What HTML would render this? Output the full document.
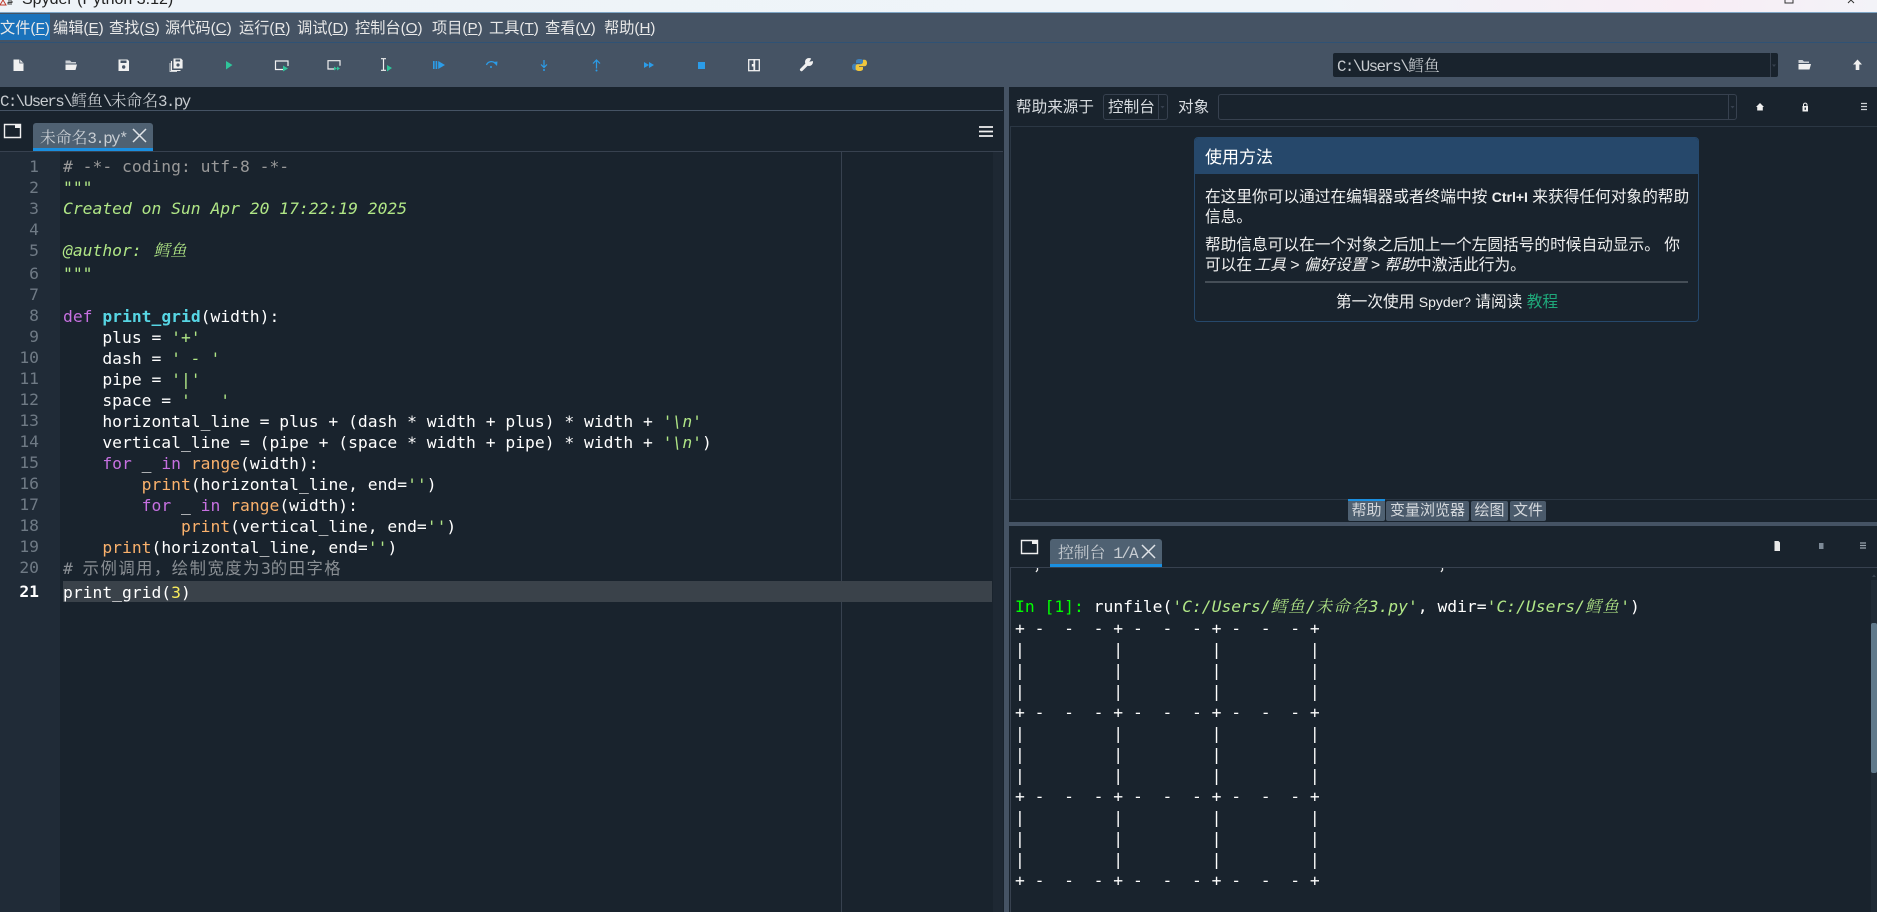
<!DOCTYPE html>
<html lang="zh">
<head>
<meta charset="utf-8">
<title>Spyder (Python 3.12)</title>
<style>
html,body{margin:0;padding:0;background:#19232D;}
body{position:relative;width:1877px;height:912px;overflow:hidden;font-family:"Liberation Sans","Noto Sans CJK SC",sans-serif;color:#f0f0f0;}
.a{position:absolute;}
.t{position:absolute;white-space:nowrap;}
.menu{position:absolute;top:19px;line-height:20px;font-size:15.2px;color:#e8e8e8;white-space:nowrap;}
.m{position:absolute;white-space:pre;font-family:"Liberation Mono","Noto Serif CJK SC",monospace;font-size:15.8px;letter-spacing:-1.58px;line-height:20px;color:#c8ccd0;}
.m span{font-family:"Noto Serif CJK SC",serif;font-size:15.8px;letter-spacing:0;}
.s{position:absolute;white-space:nowrap;font-size:15.6px;line-height:20px;color:#d8dce0;}
.c{position:absolute;left:63px;white-space:pre;font-family:"DejaVu Sans Mono","Noto Sans CJK SC",monospace;font-size:16.33px;line-height:21px;color:#fff;}
.n{position:absolute;left:0;width:39px;text-align:right;font-family:"DejaVu Sans Mono",monospace;font-size:16.33px;line-height:21px;color:#6f7a85;}
.g{color:#b0e686;font-style:italic;}
.z{font-family:"Noto Serif CJK SC",serif;letter-spacing:1.3px;}
.k{color:#c670e0;}
.d{color:#57d6e4;font-weight:bold;}
.b{color:#fab16c;}
.o{color:#999;}
.y{color:#faed5c;}
.o2{color:#8a8f94;}
.h{position:absolute;left:1205px;white-space:nowrap;font-size:15.7px;line-height:20px;color:#f0f0f0;}
.h b,.h2{font-family:"Liberation Sans",sans-serif;}
.bt{position:absolute;top:501px;height:20px;background:#4a5a6b;border-radius:2px;color:#d4d8dc;font-size:15px;line-height:20px;text-align:center;}
.q{position:absolute;left:1015px;white-space:pre;font-family:"DejaVu Sans Mono","Noto Sans CJK SC",monospace;font-size:16.33px;line-height:21px;color:#fff;}
</style>
</head>
<body>
<!-- title bar -->
<div class="a" style="left:0;top:0;width:1877px;height:12px;background:linear-gradient(90deg,#eef3f8 0%,#eff4f9 70%,#f8edf5 90%,#f3f3f8 100%);"></div>
<div class="a" style="left:0;top:12px;width:1877px;height:1px;background:#7fa6c6;"></div>
<!-- menu and toolbar -->
<div class="a" style="left:0;top:13px;width:1877px;height:74px;background:#455364;"></div>
<div class="a" style="left:0;top:42px;width:1877px;height:1px;background:#2f5275;"></div>
<div class="a" style="left:0;top:14px;width:50px;height:26px;background:#1a72bb;"></div>
<div class="menu" style="left:0;">文件(<u>F</u>)</div>
<div class="menu" style="left:53px;">编辑(<u>E</u>)</div>
<div class="menu" style="left:109px;">查找(<u>S</u>)</div>
<div class="menu" style="left:165px;">源代码(<u>C</u>)</div>
<div class="menu" style="left:239px;">运行(<u>R</u>)</div>
<div class="menu" style="left:297px;">调试(<u>D</u>)</div>
<div class="menu" style="left:355px;">控制台(<u>O</u>)</div>
<div class="menu" style="left:432px;">项目(<u>P</u>)</div>
<div class="menu" style="left:489px;">工具(<u>T</u>)</div>
<div class="menu" style="left:545px;">查看(<u>V</u>)</div>
<div class="menu" style="left:604px;">帮助(<u>H</u>)</div>

<!-- working dir -->
<div class="a" style="left:1333px;top:53px;width:445px;height:24px;background:#19232D;border-radius:2px;"></div>
<div class="a" style="left:1770px;top:53px;width:1px;height:24px;background:#37414F;"></div>
<div class="m" style="left:1337px;top:55px;">C:\Users\<span>鳕鱼</span></div>

<!-- path row -->
<div class="m" style="left:0;top:90px;">C:\Users\<span>鳕鱼</span>\<span>未命名</span>3.py</div>
<div class="a" style="left:0;top:110px;width:1003px;height:1px;background:#455364;"></div>

<!-- editor tab -->
<div class="a" style="left:33px;top:123px;width:120px;height:25px;background:#4f6172;border-radius:3px 3px 0 0;"></div>
<div class="a" style="left:33px;top:148px;width:120px;height:3px;background:#1a8fe0;"></div>
<div class="m" style="left:40px;top:127px;color:#c9ced3;"><span>未命名</span>3.py*</div>
<div class="a" style="left:0;top:151px;width:1003px;height:1px;background:#37414F;"></div>

<!-- editor -->
<div class="a" style="left:0;top:152px;width:60px;height:760px;background:#202b37;"></div>
<div class="a" style="left:841px;top:152px;width:1px;height:760px;background:#37414F;"></div>
<div class="a" style="left:993px;top:152px;width:10px;height:760px;background:#1e2833;"></div>
<div class="a" style="left:63px;top:581px;width:929px;height:21px;background:#3a424a;"></div>

<div class="n" style="top:156px;">1</div>
<div class="n" style="top:177px;">2</div>
<div class="n" style="top:198px;">3</div>
<div class="n" style="top:219px;">4</div>
<div class="n" style="top:240px;">5</div>
<div class="n" style="top:263px;">6</div>
<div class="n" style="top:284px;">7</div>
<div class="n" style="top:305px;">8</div>
<div class="n" style="top:326px;">9</div>
<div class="n" style="top:347px;">10</div>
<div class="n" style="top:368px;">11</div>
<div class="n" style="top:389px;">12</div>
<div class="n" style="top:410px;">13</div>
<div class="n" style="top:431px;">14</div>
<div class="n" style="top:452px;">15</div>
<div class="n" style="top:473px;">16</div>
<div class="n" style="top:494px;">17</div>
<div class="n" style="top:515px;">18</div>
<div class="n" style="top:536px;">19</div>
<div class="n" style="top:557px;">20</div>
<div class="n" style="top:581px;color:#fff;font-weight:bold;">21</div>

<div class="c o" style="top:156px;"># -*- coding: utf-8 -*-</div>
<div class="c g" style="top:177px;">"""</div>
<div class="c g" style="top:198px;">Created on Sun Apr 20 17:22:19 2025</div>
<div class="c g" style="top:239px;">@author: <span class="z" style="margin-left:2px;letter-spacing:.4px;">鳕鱼</span></div>
<div class="c g" style="top:263px;">"""</div>
<div class="c" style="top:306px;"><span class="k">def</span> <span class="d">print_grid</span>(width):</div>
<div class="c" style="top:327px;">    plus = <span class="g">'+'</span></div>
<div class="c" style="top:348px;">    dash = <span class="g">' - '</span></div>
<div class="c" style="top:369px;">    pipe = <span class="g">'|'</span></div>
<div class="c" style="top:390px;">    space = <span class="g">'   '</span></div>
<div class="c" style="top:411px;">    horizontal_line = plus + (dash * width + plus) * width + <span class="g">'\n'</span></div>
<div class="c" style="top:432px;">    vertical_line = (pipe + (space * width + pipe) * width + <span class="g">'\n'</span>)</div>
<div class="c" style="top:453px;">    <span class="k">for</span> _ <span class="k">in</span> <span class="b">range</span>(width):</div>
<div class="c" style="top:474px;">        <span class="b">print</span>(horizontal_line, end=<span class="g">''</span>)</div>
<div class="c" style="top:495px;">        <span class="k">for</span> _ <span class="k">in</span> <span class="b">range</span>(width):</div>
<div class="c" style="top:516px;">            <span class="b">print</span>(vertical_line, end=<span class="g">''</span>)</div>
<div class="c" style="top:537px;">    <span class="b">print</span>(horizontal_line, end=<span class="g">''</span>)</div>
<div class="c o2" style="top:557px;"># <span style="font-family:'Noto Sans CJK SC',sans-serif;letter-spacing:1.5px;">示例调用，绘制宽度为</span>3<span style="font-family:'Noto Sans CJK SC',sans-serif;letter-spacing:1.5px;">的田字格</span></div>
<div class="c" style="top:582px;">print_grid(<span class="y">3</span>)</div>

<!-- splitters -->
<div class="a" style="left:1004px;top:87px;width:5px;height:825px;background:#455364;"></div>
<div class="a" style="left:1009px;top:522px;width:868px;height:4px;background:#455364;"></div>

<!-- help pane -->
<div class="s" style="left:1016px;top:98px;">帮助来源于</div>
<div class="a" style="left:1103px;top:94px;width:63px;height:24px;border:1px solid #37414F;border-radius:3px;"></div>
<div class="a" style="left:1158px;top:95px;width:1px;height:24px;background:#37414F;"></div>
<div class="s" style="left:1108px;top:98px;">控制台</div>
<div class="s" style="left:1178px;top:98px;">对象</div>
<div class="a" style="left:1218px;top:94px;width:517px;height:24px;border:1px solid #37414F;border-radius:3px;"></div>
<div class="a" style="left:1728px;top:95px;width:1px;height:24px;background:#37414F;"></div>
<div class="a" style="left:1010px;top:126px;width:867px;height:1px;background:#2b3744;"></div>
<div class="a" style="left:1010px;top:126px;width:1px;height:374px;background:#2b3744;"></div>
<div class="a" style="left:1010px;top:499px;width:867px;height:1px;background:#2b3744;"></div>

<!-- help card -->
<div class="a" style="left:1194px;top:137px;width:503px;height:183px;border:1px solid #26486B;border-radius:4px;overflow:hidden;">
  <div style="height:36px;background:#26486B;"></div>
</div>
<div class="t" style="left:1205px;top:148px;font-size:17px;line-height:20px;color:#fff;">使用方法</div>
<div class="h" style="top:187px;">在这里你可以通过在编辑器或者终端中按 <b style="font-size:14px;">Ctrl+I</b> 来获得任何对象的帮助</div>
<div class="h" style="top:208px;">信息。</div>
<div class="h" style="top:236px;">帮助信息可以在一个对象之后加上一个左圆括号的时候自动显示。 你</div>
<div class="h" style="top:256px;">可以在 <i style="margin-left:-2px;margin-right:-4px;">工具 &gt; 偏好设置 &gt; 帮助</i> 中激活此行为。</div>
<div class="a" style="left:1205px;top:281px;width:483px;height:2px;background:#454e57;"></div>
<div class="h" style="top:292px;left:1336px;">第一次使用 <span class="h2" style="font-size:14px;">Spyder?</span> 请阅读 <span style="color:#1fa87a;">教程</span></div>

<!-- bottom tabs -->
<div class="bt" style="left:1348px;width:37px;top:500px;height:21px;border-top:0;line-height:22px;background:#4f6172;">帮助</div>
<div class="a" style="left:1348px;top:499px;width:37px;height:2px;background:#1a8fe0;"></div>
<div class="bt" style="left:1386px;width:83px;">变量浏览器</div>
<div class="bt" style="left:1471px;width:37px;">绘图</div>
<div class="bt" style="left:1510px;width:36px;">文件</div>

<!-- console tab -->
<div class="a" style="left:1050px;top:539px;width:112px;height:25px;background:#4f6172;border-radius:3px 3px 0 0;"></div>
<div class="a" style="left:1050px;top:564px;width:112px;height:3px;background:#1a8fe0;"></div>
<div class="m" style="left:1058px;top:542px;color:#c9ced3;"><span>控制台</span> 1/A</div>
<div class="a" style="left:1010px;top:567px;width:867px;height:1px;background:#37414F;"></div>
<div class="a" style="left:1010px;top:567px;width:1px;height:345px;background:#37414F;"></div>

<!-- console -->
<div class="q" style="top:595px;"><span style="color:#00ff00;">In [1]:</span> runfile(<span class="g">'C:/Users/<span class="z">鳕鱼</span>/<span class="z">未命名</span>3.py'</span>, wdir=<span class="g">'C:/Users/<span class="z">鳕鱼</span>'</span>)</div>
<div class="q" style="top:618px;">+ -  -  - + -  -  - + -  -  - +</div>
<div class="q" style="top:639px;">|         |         |         |</div>
<div class="q" style="top:660px;">|         |         |         |</div>
<div class="q" style="top:681px;">|         |         |         |</div>
<div class="q" style="top:702px;">+ -  -  - + -  -  - + -  -  - +</div>
<div class="q" style="top:723px;">|         |         |         |</div>
<div class="q" style="top:744px;">|         |         |         |</div>
<div class="q" style="top:765px;">|         |         |         |</div>
<div class="q" style="top:786px;">+ -  -  - + -  -  - + -  -  - +</div>
<div class="q" style="top:807px;">|         |         |         |</div>
<div class="q" style="top:828px;">|         |         |         |</div>
<div class="q" style="top:849px;">|         |         |         |</div>
<div class="q" style="top:870px;">+ -  -  - + -  -  - + -  -  - +</div>

<!-- console scrollbar -->
<div class="a" style="left:1871px;top:580px;width:6px;height:332px;background:#1f2a35;"></div>
<div class="a" style="left:1871px;top:623px;width:6px;height:150px;background:#60798B;border-radius:2px;"></div>

<!-- svg icons -->
<svg class="a" style="left:0;top:0;" width="1877" height="912" viewBox="0 0 1877 912" xmlns="http://www.w3.org/2000/svg">
  <!-- title bar -->
  <text x="22" y="4" font-family="Liberation Sans, sans-serif" font-size="16" fill="#222">Spyder (Python 3.12)</text>
  <path d="M0 5 L3 0 L6 5Z" fill="none" stroke="#c0392b" stroke-width="1"/>
  <path d="M8 1 h4 M12 1 v1.5 h-4 v1.5 h4" fill="none" stroke="#444" stroke-width="1"/>
  <path d="M1785 0 v3 h8 v-3" fill="none" stroke="#333" stroke-width="1"/>
  <path d="M1848 3 L1851 0 L1854 3" fill="none" stroke="#333" stroke-width="1"/>

  <!-- new file -->
  <path d="M13.5 59.5 h6.5 l3.5 3.5 v8 h-10z" fill="#f0f0f0"/>
  <path d="M19.8 59.5 v3.5 h3.5" fill="none" stroke="#455364" stroke-width=".8"/>
  <!-- open folder -->
  <path d="M65.5 60.5 h4.5 l1.5 1.5 h4.5 v1.5 h-10.5z" fill="#c9ced3"/>
  <path d="M65.5 64.5 h11.5 l-1.5 5.5 h-10z" fill="#f0f0f0"/>
  <!-- save -->
  <path d="M118.5 59.5 h9 l1.5 1.5 v10 h-10.5z" fill="#f0f0f0"/>
  <rect x="120.5" y="60.5" width="6" height="2.5" fill="#455364"/>
  <circle cx="123.7" cy="67" r="1.7" fill="#455364"/>
  <!-- save all -->
  <path d="M173.5 58.5 h7.5 l1.6 1.6 v8.4 h-9.1z" fill="#f0f0f0"/>
  <rect x="175.5" y="59.5" width="4.6" height="2" fill="#455364"/>
  <circle cx="178" cy="65" r="1.6" fill="#455364"/>
  <path d="M171.5 61 v9.5 h9" fill="none" stroke="#f0f0f0" stroke-width="1.1"/>
  <path d="M170 63 v8.5 h7" fill="none" stroke="#d0d4d8" stroke-width=".9"/>
  <!-- run -->
  <path d="M226 61 L232.5 65 L226 69.5Z" fill="#2fc49a"/>
  <!-- run cell -->
  <path d="M283 69.5 h-7.5 v-8.5 h12.5 v5" fill="none" stroke="#f0f0f0" stroke-width="1.2"/>
  <path d="M283 65.5 L288 68.5 L283 71.5Z" fill="#2fc49a"/>
  <!-- run cell advance -->
  <path d="M334 69 h-6 v-8.3 h12 v5" fill="none" stroke="#f0f0f0" stroke-width="1.2"/>
  <path d="M334 66.5 L337 68.5 L334 70.5Z M337 66.5 L340 68.5 L337 70.5Z" fill="#2fc49a"/>
  <!-- run selection -->
  <path d="M381 58.7 h5 M381 70.3 h5 M383.5 58.7 v11.6" fill="none" stroke="#f0f0f0" stroke-width="1.2"/>
  <path d="M387 65 L392 68 L387 71.5Z" fill="#2fc49a"/>
  <!-- debug -->
  <path d="M433 61 h1.6 v8 h-1.6z M435.6 61 h1.6 v8 h-1.6z M438.2 61 v8 L445 65Z" fill="#2b9ce8"/>
  <!-- step over -->
  <path d="M486.5 65 a5.2 5 0 0 1 8.5 -2" fill="none" stroke="#2b9ce8" stroke-width="1.3"/>
  <path d="M493 62 L497.5 61.5 L497 66 Z" fill="#2b9ce8"/>
  <circle cx="491" cy="67" r="1" fill="#2b9ce8"/>
  <!-- step into -->
  <path d="M544 60 v8 M541 64.5 L544 67.5 L547 64.5" fill="none" stroke="#2b9ce8" stroke-width="1.2"/>
  <circle cx="544" cy="70" r="1" fill="#2b9ce8"/>
  <!-- step out -->
  <path d="M596.5 60.5 v8 M593 63.5 L596.5 60 L600 63.5" fill="none" stroke="#2b9ce8" stroke-width="1.2"/>
  <circle cx="596.5" cy="70.5" r="1" fill="#2b9ce8"/>
  <!-- continue -->
  <path d="M644 62 L649 65 L644 68Z M649 62 L654 65 L649 68Z" fill="#2b9ce8"/>
  <!-- stop -->
  <rect x="698" y="62" width="7" height="7" fill="#2b9ce8"/>
  <!-- layout -->
  <rect x="748.7" y="59.7" width="10.6" height="11" fill="none" stroke="#f0f0f0" stroke-width="1.3"/>
  <rect x="753.4" y="59" width="1.8" height="12" fill="#f0f0f0"/>
  <rect x="751.8" y="64" width="1.7" height="2.5" fill="#f0f0f0"/>
  <!-- wrench -->
  <path d="M801.5 69.7 L807.2 64" stroke="#f0f0f0" stroke-width="3.1" stroke-linecap="round" fill="none"/>
  <circle cx="809" cy="62" r="4" fill="#f0f0f0"/>
  <path d="M809.3 61.8 L812.5 56.5 L815.5 60.5Z" fill="#455364"/>
  <!-- python -->
  <path d="M859.5 59 c-3 0 -3.5 1.2 -3.5 2.5 v1.5 h4 v.8 h-5.5 c-1.5 0 -2.5 1.2 -2.5 3.2 s1 3.2 2.5 3.2 h1.5 v-2 c0 -1.5 1 -2.4 2.4 -2.4 h3 c1.2 0 2 -1 2 -2 v-2.5 c0 -1.3 -1.2 -2.3 -3.9 -2.3z" fill="#3f80b8"/>
  <path d="M859.5 59 c-3 0 -3.5 1.2 -3.5 2.5 v1.5 h4 v.8 h-5.5 c-1.5 0 -2.5 1.2 -2.5 3.2 s1 3.2 2.5 3.2 h1.5 v-2 c0 -1.5 1 -2.4 2.4 -2.4 h3 c1.2 0 2 -1 2 -2 v-2.5 c0 -1.3 -1.2 -2.3 -3.9 -2.3z" fill="#f0c63c" transform="rotate(180 859.5 65)"/>

  <!-- cwd combo arrow + folder + up -->
  <path d="M1772 64.5 h4 l-2 2.5z" fill="#37414F"/>
  <path d="M1798.5 60 h4 l1.5 1.5 h5 v1.5 h-10.5z" fill="#c9ced3"/>
  <path d="M1798.5 64 h12.5 l-1.5 5.5 h-11z" fill="#f0f0f0"/>
  <path d="M1857.5 59.5 L1862 64.5 H1859.3 V70 H1855.7 V64.5 H1853Z" fill="#f0f0f0"/>

  <!-- tab doc icons -->
  <path d="M4.5 124.5 h16 v13 h-16z" fill="#19232D" stroke="#f0f0f0" stroke-width="1.4"/>
  <path d="M15 124 h6 v4 h-6z" fill="#f0f0f0"/>
  <path d="M1021.5 540.5 h16 v13 h-16z" fill="#19232D" stroke="#f0f0f0" stroke-width="1.4"/>
  <path d="M1032 540 h6 v4 h-6z" fill="#f0f0f0"/>

  <!-- close X -->
  <path d="M133 129 L146 142 M146 129 L133 142" stroke="#e0e4e8" stroke-width="1.5" fill="none"/>
  <path d="M1142 545 L1155 558 M1155 545 L1142 558" stroke="#e0e4e8" stroke-width="1.5" fill="none"/>

  <!-- editor hamburger -->
  <path d="M979 127 h14 M979 131.5 h14 M979 136 h14" stroke="#f0f0f0" stroke-width="1.8" fill="none"/>

  <!-- combo arrows -->
  <path d="M1160.5 106 h4 l-2 2.5z" fill="#37414F"/>
  <path d="M1730.5 106 h4 l-2 2.5z" fill="#37414F"/>

  <!-- help icons -->
  <path d="M1760 103 L1764 107 H1762.8 V110.5 H1757.2 V107 H1756Z" fill="#f0f0f0"/>
  <path d="M1802.5 106 h5.5 v5.5 h-5.5z" fill="#f0f0f0"/>
  <path d="M1803.5 106 v-1.5 a1.8 1.8 0 0 1 3.5 0 v1.5" fill="none" stroke="#f0f0f0" stroke-width="1"/>
  <rect x="1804.6" y="107.5" width="1.3" height="2.3" fill="#19232D"/>
  <path d="M1861 103.5 h6 M1861 106.5 h6 M1861 109.5 h6" stroke="#d0d4d8" stroke-width="1.3" fill="none"/>

  <!-- console icons -->
  <path d="M1774.5 541 h4 l1.5 1.5 v8.5 h-5.5z" fill="#e8e8e8"/>
  <rect x="1819" y="543" width="4.5" height="6" fill="#7d8a97"/>
  <path d="M1860 543 h6 M1860 545.5 h6 M1860 548 h6" stroke="#9aa4ae" stroke-width="1.2" fill="none"/>

  <!-- cut-off console text -->
  <path d="M1037.5 568 v2 l-1.5 2" stroke="#e8e8e8" stroke-width="1.3" fill="none"/>
  <path d="M1442.5 568 v2 l-1.5 2" stroke="#e8e8e8" stroke-width="1.3" fill="none"/>

  <!-- scroll arrow -->
  <path d="M1872 577 h4 l-2 -2.5z" fill="#37414F"/>
</svg>
</body>
</html>
